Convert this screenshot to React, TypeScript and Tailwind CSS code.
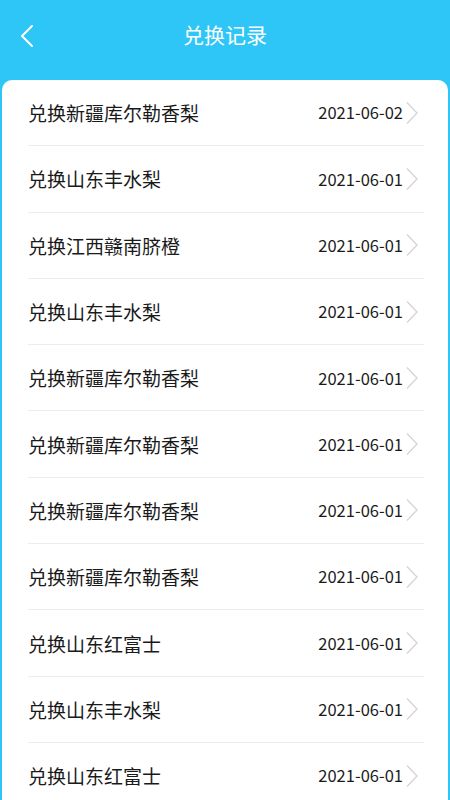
import React from "react";

// Exchange record list
interface RecordItem {
  id: number;
  title: string;
  date: string;
}

const RECORDS: RecordItem[] = [
  { id: 1, title: "兑换新疆库尔勒香梨", date: "2021-06-02" },
  { id: 2, title: "兑换山东丰水梨", date: "2021-06-01" },
  { id: 3, title: "兑换江西赣南脐橙", date: "2021-06-01" },
  { id: 4, title: "兑换山东丰水梨", date: "2021-06-01" },
  { id: 5, title: "兑换新疆库尔勒香梨", date: "2021-06-01" },
  { id: 6, title: "兑换新疆库尔勒香梨", date: "2021-06-01" },
  { id: 7, title: "兑换新疆库尔勒香梨", date: "2021-06-01" },
  { id: 8, title: "兑换新疆库尔勒香梨", date: "2021-06-01" },
  { id: 9, title: "兑换山东红富士", date: "2021-06-01" },
  { id: 10, title: "兑换山东丰水梨", date: "2021-06-01" },
  { id: 11, title: "兑换山东红富士", date: "2021-06-01" },
];

const FONT = {
  fontFamily: '"Noto Sans CJK SC", "Noto Sans", sans-serif',
};

const App = () => {
  return (
    <div
      className="min-h-[800px] w-[450px] bg-[#2ec6f7] flex flex-col"
      style={FONT}
    >
      {/* Header */}
      <div className="relative h-[80px] flex items-start justify-center pt-[19px]">
        <button className="absolute left-[18px] top-[24px] w-[18px] h-[24px] flex items-center justify-center">
          <svg width="16" height="24" viewBox="0 0 16 24" fill="none">
            <polyline
              points="13,2 3,12 13,22"
              stroke="white"
              strokeWidth="2"
              strokeLinecap="round"
              strokeLinejoin="round"
            />
          </svg>
        </button>
        <h1 className="text-white text-[21px] leading-[30px]">兑换记录</h1>
      </div>

      {/* List card */}
      <div className="flex-1 mx-[2px] bg-white rounded-t-[10px]">
        <ul className="pl-[26px] pr-[24px]">
          {RECORDS.map((r) => (
            <li
              key={r.id}
              className="h-[66.3px] flex items-center justify-between border-b border-[#ececec]"
            >
              <span className="text-[19px] text-[#1a1a1a] leading-none">
                {r.title}
              </span>
              <span className="flex items-center">
                <span className="text-[16.5px] text-[#1a1a1a] leading-none">
                  {r.date}
                </span>
                <svg
                  width="14"
                  height="24"
                  viewBox="0 0 14 24"
                  fill="none"
                  className="ml-[1px] mr-[6px]"
                >
                  <polyline
                    points="3,1.5 13,12 3,22.5"
                    stroke="#d4d4d4"
                    strokeWidth="1.3"
                  />
                </svg>
              </span>
            </li>
          ))}
        </ul>
      </div>
    </div>
  );
};

export default App;
